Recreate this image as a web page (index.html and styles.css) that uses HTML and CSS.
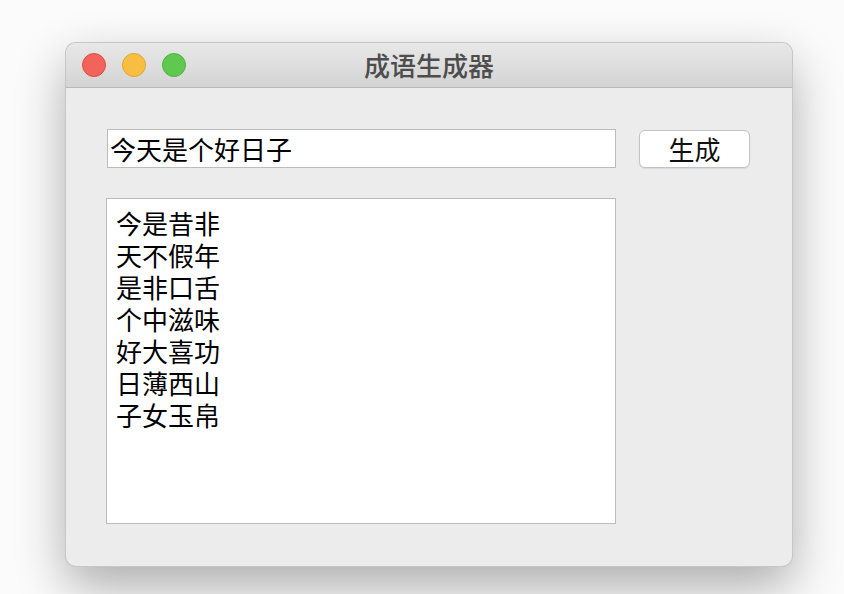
FILE: index.html
```html
<!DOCTYPE html>
<html lang="zh">
<head>
<meta charset="utf-8">
<link rel="stylesheet" href="styles.css">
</head>
<body>
<div class="window">
  <div class="titlebar">
    <div class="lights">
      <span class="light red"></span>
      <span class="light yellow"></span>
      <span class="light green"></span>
    </div>
    <div class="title">成语生成器</div>
  </div>
  <div class="content">
    <div class="row">
      <div class="input">今天是个好日子</div>
      <div class="button">生成</div>
    </div>
    <div class="list">
      <div class="item">今是昔非</div>
      <div class="item">天不假年</div>
      <div class="item">是非口舌</div>
      <div class="item">个中滋味</div>
      <div class="item">好大喜功</div>
      <div class="item">日薄西山</div>
      <div class="item">子女玉帛</div>
    </div>
  </div>
</div>
</body>
</html>
```
FILE: styles.css
```css
html, body {
  margin: 0;
  padding: 0;
}
body {
  width: 844px;
  height: 594px;
  background: #fbfbfb;
  font-family: "Noto Sans CJK SC", "Noto Sans", sans-serif;
  padding: 43px 0 0 66px;
  box-sizing: border-box;
  overflow: hidden;
}
.window {
  width: 726px;
  height: 523px;
  background: #ececec;
  border-radius: 10px;
  box-shadow: 0 0 0 1px #c6c6c6, 0 20px 50px rgba(0,0,0,0.32);
  overflow: hidden;
  display: flex;
  flex-direction: column;
}
.titlebar {
  height: 44px;
  flex: none;
  background: linear-gradient(#e8e8e8, #d4d4d4);
  border-bottom: 1px solid #b9b9b9;
  position: relative;
  display: flex;
  align-items: center;
}
.lights {
  display: flex;
  gap: 16px;
  padding-left: 16px;
}
.light {
  width: 24px;
  height: 24px;
  border-radius: 50%;
  box-sizing: border-box;
}
.red { background: #f2645b; border: 1px solid #df4c43; }
.yellow { background: #f8be41; border: 1px solid #e0a530; }
.green { background: #5fc94f; border: 1px solid #4cb33d; }
.title {
  position: absolute;
  left: 0;
  right: 0;
  top: 0;
  bottom: 0;
  text-align: center;
  line-height: 44px;
  font-size: 26px;
  font-weight: 500;
  color: #4d4d4d;
  pointer-events: none;
}
.content {
  padding: 41px 41px 0 40px;
}
.row {
  display: flex;
  align-items: flex-start;
}
.input {
  margin-left: 1px;
  width: 509px;
  height: 39px;
  box-sizing: border-box;
  background: #fff;
  border: 1px solid #bcbcbc;
  font-size: 26px;
  line-height: 37px;
  padding-left: 2px;
  color: #000;
}
.button {
  margin-left: 23px;
  margin-top: 1px;
  width: 111px;
  height: 38px;
  box-sizing: border-box;
  background: #fff;
  border: 1px solid #c3c3c3;
  border-radius: 6px;
  box-shadow: 0 1px 1px rgba(0,0,0,0.08);
  text-align: center;
  font-size: 26px;
  line-height: 36px;
  color: #111;
}
.list {
  margin-top: 30px;
  width: 510px;
  height: 326px;
  box-sizing: border-box;
  background: #fff;
  border: 1px solid #bcbcbc;
  padding: 8px 9px;
  font-size: 26px;
  color: #000;
}
.item {
  height: 32px;
  line-height: 32px;
}
```
